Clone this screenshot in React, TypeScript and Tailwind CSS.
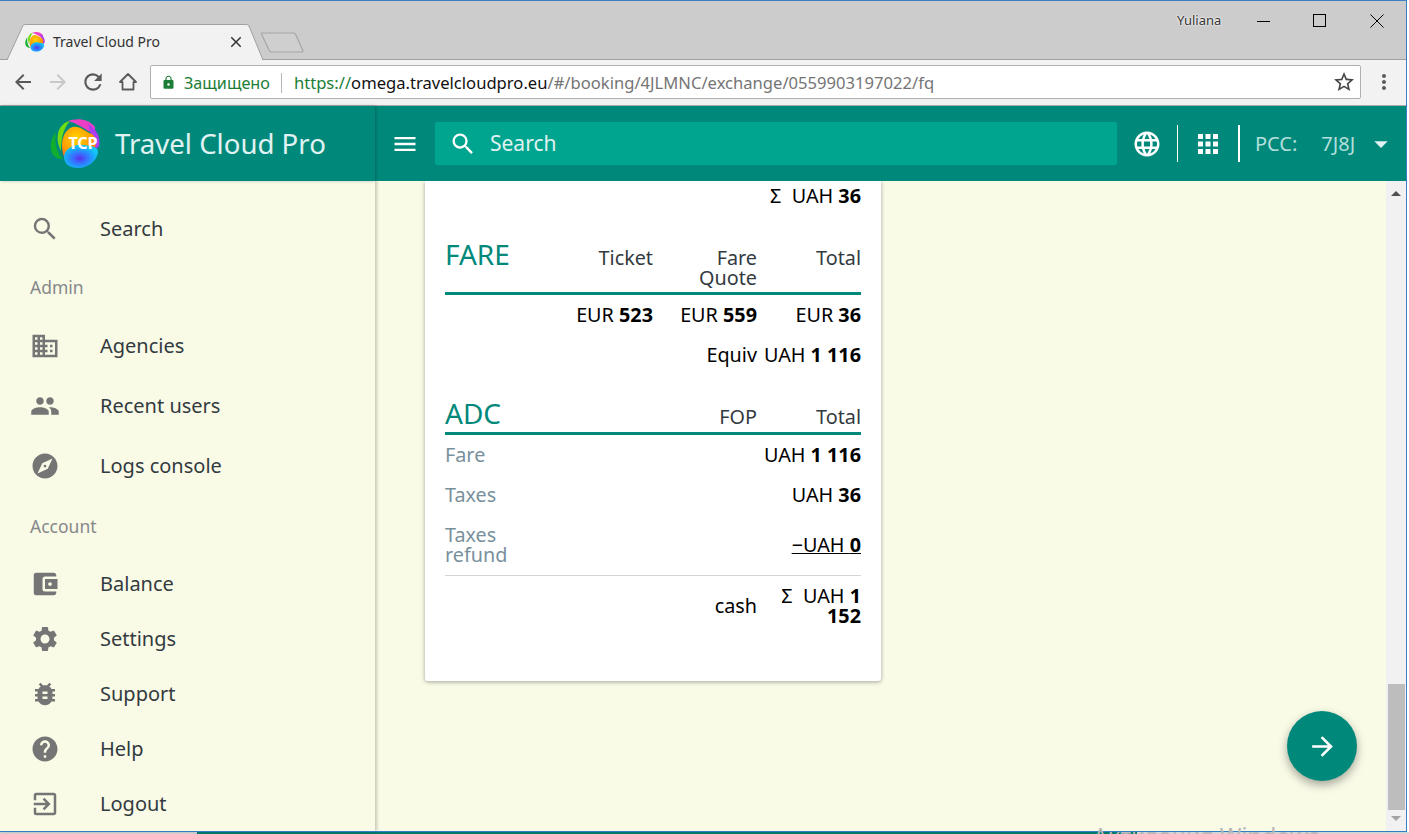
import React from "react";
import { MdSearch, MdBusiness, MdPeople, MdExplore, MdAccountBalanceWallet, MdSettings, MdBugReport, MdHelp, MdExitToApp, MdMenu, MdLanguage, MdApps, MdArrowForward, MdArrowDropDown, MdLock, MdClose, MdArrowBack, MdRefresh, MdStarBorder, MdMoreVert } from "react-icons/md";

function Logo({ size, mark = true }: { size: number; mark?: boolean }) {
  const id = "g" + size;
  return (
    <svg width={size} height={size} viewBox="0 0 50 50">
      <defs>
        <radialGradient id={id + "o"} cx="0.42" cy="0.35" r="0.65">
          <stop offset="0" stopColor="#ffd400" />
          <stop offset="0.7" stopColor="#ff9a00" />
          <stop offset="1" stopColor="#ff6a20" />
        </radialGradient>
        <radialGradient id={id + "b"} cx="0.46" cy="0.58" r="0.55">
          <stop offset="0" stopColor="#5b2fe6" />
          <stop offset="0.35" stopColor="#3a6cff" />
          <stop offset="0.75" stopColor="#1aa8ff" />
          <stop offset="1" stopColor="#12c8f5" />
        </radialGradient>
      </defs>
      <path d="M6 13C1 19-1 27 2 34 4 38 8 40 13 40 7 34 4 24 6 13Z" fill="#0fae2e" />
      <path d="M20 2C11 4 6 12 8 24 9 28 10 30 11 32 11 20 13 10 20 2Z" fill="#6fdd12" />
      <path d="M18 2C26-1 38-1 45 8 46 12 42 14 38 12 32 8 26 4 18 2Z" fill="#ea3fc4" />
      <path d="M38 5C46 9 51 18 49 27 47 31 43 30 42 24 42 18 40 12 38 5Z" fill="#ad3cf2" />
      <path d="M12 26C12 14 20 6 27 8 33 9 36 13 42 15 47 19 47 26 44 30 36 36 24 36 15 40 13 36 12 31 12 26Z" fill={`url(#${id}o)`} />
      <path d="M14 38C14 30 24 25 33 26 41 27 48 27 48 33 47 42 38 49 28 49 20 49 14 45 14 38Z" fill={`url(#${id}b)`} />
      {mark && (
        <text x="33" y="30" textAnchor="middle" fontSize="16" fontWeight="700" fill="#fff" fontFamily="Noto Sans, sans-serif">TCP</text>
      )}
    </svg>
  );
}

function NavItem({ icon, label, h }: { icon: React.ReactNode; label: string; h: string }) {
  return (
    <div className={`flex items-center ${h} pl-[30px]`}>
      <span className="w-[30px] flex justify-center text-[#757575] text-[30px]">{icon}</span>
      <span className="ml-10 text-[20px] text-[#333a40]">{label}</span>
    </div>
  );
}

function Amount({ cur, val }: { cur: string; val: string }) {
  return (
    <span className="whitespace-nowrap">
      {cur} <b className="font-bold">{val}</b>
    </span>
  );
}

function Chrome() {
  return (
    <div className="h-[105px] shrink-0 flex flex-col border-t border-[#3b7fc4] bg-[#cccccc] relative">
      <div className="h-[58px] shrink-0 relative">
        <div className="absolute left-[6px] top-[23px] h-[36px] w-[258px] z-10">
          <svg width="258" height="37" viewBox="0 0 258 37" className="absolute inset-0">
            <path d="M1 36 L17 1.5 Q18 0.5 20 0.5 L240 0.5 Q242 0.5 243 2 L257 36" fill="#f2f2f2" stroke="#a0a0a0" />
          </svg>
          <span className="absolute left-[19px] top-[8px]"><Logo size={20} mark={false} /></span>
          <span className="absolute left-[47px] top-[8px] text-[14px] leading-[20px] text-[#333] font-['Noto_Sans',sans-serif]">Travel Cloud Pro</span>
          <MdClose className="absolute left-[221px] top-[9px] text-[#333]" size={18} />
        </div>
        <svg width="46" height="24" viewBox="0 0 46 24" className="absolute left-[260px] top-[30px]">
          <path d="M2 2 L33 2 Q35 2 36 4 L43 20 Q43 21 41 21 L12 21 Q10 21 9 19 L2 4 Q1 2 2 2Z" fill="#cfcfcf" stroke="#a6a6a6" strokeWidth="1.2" />
        </svg>
        <span className="absolute left-[1177px] top-[11px] text-[13px] leading-[16px] text-[#333] [text-shadow:0_0_2px_#fff,0_0_2px_#fff] font-['Noto_Sans',sans-serif]">Yuliana</span>
        <span className="absolute left-[1257px] top-[20px] w-[13px] h-px bg-black" />
        <span className="absolute left-[1313px] top-[13px] w-[13px] h-[13px] border border-black" />
        <svg width="14" height="14" viewBox="0 0 14 14" className="absolute left-[1370px] top-[13px]">
          <path d="M0.5 0.5 L13.5 13.5 M13.5 0.5 L0.5 13.5" stroke="#000" fill="none" />
        </svg>
      </div>
      <div className="h-[46px] shrink-0 bg-[#f2f2f2] border-t border-[#a0a0a0] relative">
        <MdArrowBack className="absolute left-[11px] top-[10px] text-[#5a5a5a]" size={24} />
        <MdArrowBack className="absolute left-[46px] top-[10px] text-[#c8c8c8] rotate-180" size={24} />
        <MdRefresh className="absolute left-[80px] top-[9px] text-[#5a5a5a]" size={26} />
        <svg width="20" height="20" viewBox="0 0 20 20" className="absolute left-[118px] top-[12px]">
          <path d="M10 2 L18 10 H15.5 V17.5 H4.5 V10 H2 Z" fill="none" stroke="#5a5a5a" strokeWidth="1.8" strokeLinejoin="round" />
        </svg>
        <div className="absolute left-[150px] top-[5px] w-[1211px] h-[34px] pt-[1px] bg-white border border-[#b0b0b0] rounded-[2px] flex items-center text-[16.2px] leading-[20px] whitespace-nowrap font-['Noto_Sans',sans-serif]">
          <MdLock className="ml-[10px] text-[#1b7e36]" size={15} />
          <span className="ml-[8px] text-[#1b7e36]">Защищено</span>
          <span className="ml-[11px] h-[20px] w-px bg-[#b5b5b5]" />
          <span className="ml-[12px] text-[16.6px]"><span className="text-[#1b7e36]">https://</span><span className="text-[#111]">omega.travelcloudpro.eu</span><span className="text-[#757575]">/#/booking/4JLMNC/exchange/0559903197022/fq</span></span>
          <MdStarBorder className="absolute right-[4px] top-[4px] text-[#444]" size={24} />
        </div>
        <MdMoreVert className="absolute left-[1372px] top-[10px] text-[#5a5a5a]" size={24} />
      </div>
    </div>
  );
}

function TopBar() {
  return (
    <div className="h-[76px] shrink-0 bg-[#00897b] flex items-stretch text-white border-t border-[#a8a8a8] relative z-10">
      <div className="w-[375px] shrink-0 flex items-center pl-[50px] shadow-[1px_0_3px_rgba(0,0,0,0.25)]">
        <Logo size={50} />
        <span className="ml-[15px] -mt-[2px] text-[27.6px] leading-[40px] text-[#e0f2f1] font-['Noto_Sans',sans-serif]">Travel Cloud Pro</span>
      </div>
      <div className="flex-1 flex items-center min-w-0 pl-[16px]">
        <MdMenu size={28} className="shrink-0" />
        <div className="ml-[16px] w-[682px] h-[43px] bg-[#00a58f] rounded-[2px] flex items-center pl-[14px]">
          <MdSearch size={28} />
          <span className="ml-[13px] text-[21px] text-[#e0f2f1]">Search</span>
        </div>
        <MdLanguage size={30} className="ml-[15px] shrink-0" />
        <span className="ml-[15px] w-px h-[37px] bg-white" />
        <MdApps size={30} className="ml-[15px] shrink-0" />
        <span className="ml-[15px] w-[2px] h-[37px] bg-white" />
        <span className="ml-[15px] text-[20px] text-[#b2dfdb]">PCC:</span>
        <span className="ml-[24px] text-[20px] text-[#b2dfdb]">7J8J</span>
        <MdArrowDropDown size={32} className="ml-[10px] text-[#e0f2f1] shrink-0" />
      </div>
    </div>
  );
}

function Sidebar() {
  return (
    <div className="w-[375px] shrink-0 bg-[#f9fbe7] shadow-[2px_0_3px_rgba(0,0,0,0.2)] relative z-[1] flex flex-col pt-[18px]">
      <NavItem icon={<MdSearch />} label="Search" h="h-[60px]" />
      <div className="h-[57px] flex items-center pl-[30px] text-[17.5px] text-[#86888a]">Admin</div>
      <NavItem icon={<MdBusiness />} label="Agencies" h="h-[60px]" />
      <NavItem icon={<MdPeople />} label="Recent users" h="h-[60px]" />
      <NavItem icon={<MdExplore />} label="Logs console" h="h-[60px]" />
      <div className="h-[60px] flex items-center pl-[30px] text-[17.5px] text-[#86888a]">Account</div>
      <NavItem icon={<MdAccountBalanceWallet />} label="Balance" h="h-[55px]" />
      <NavItem icon={<MdSettings />} label="Settings" h="h-[55px]" />
      <NavItem icon={<MdBugReport />} label="Support" h="h-[55px]" />
      <NavItem icon={<MdHelp />} label="Help" h="h-[55px]" />
      <NavItem icon={<MdExitToApp />} label="Logout" h="h-[55px]" />
    </div>
  );
}

function Row({ children, className = "" }: { children: React.ReactNode; className?: string }) {
  return <div className={`grid grid-cols-[104px_104px_104px_104px] ${className}`}>{children}</div>;
}

function Card() {
  return (
    <div className="w-[456px] h-[500px] bg-white rounded-b-[3px] shadow-[0_1px_4px_rgba(0,0,0,0.35)] px-[20px] text-[19.8px] leading-[20px] text-black">
      <div className="h-[30px] flex justify-end items-center"><span>Σ&nbsp; UAH <b>36</b></span></div>
      <div className="h-[81px] pt-[37px]">
        <Row className="text-right text-[#333a40] items-start">
          <span className="text-left text-[28px] leading-[28px] text-[#00897b] -mt-[8px]">FARE</span>
          <span>Ticket</span>
          <span className="pl-[30px]">Fare Quote</span>
          <span>Total</span>
        </Row>
      </div>
      <div className="h-[3px] bg-[#00897b]" />
      <Row className="text-right h-[40px] items-center">
        <span />
        <Amount cur="EUR" val="523" />
        <Amount cur="EUR" val="559" />
        <Amount cur="EUR" val="36" />
      </Row>
      <Row className="text-right h-[40px] items-center">
        <span />
        <span />
        <span>Equiv</span>
        <Amount cur="UAH" val="1 116" />
      </Row>
      <Row className="text-right text-[#333a40] h-[57px] items-end">
        <span className="text-left text-[28px] leading-[28px] text-[#00897b] pb-[5px]">ADC</span>
        <span />
        <span className="pb-[5px]">FOP</span>
        <span className="pb-[5px]">Total</span>
      </Row>
      <div className="h-[3px] bg-[#00897b]" />
      <Row className="text-right h-[40px] items-center">
        <span className="text-left text-[#78909c]">Fare</span>
        <span />
        <span />
        <Amount cur="UAH" val="1 116" />
      </Row>
      <Row className="text-right h-[40px] items-center">
        <span className="text-left text-[#78909c]">Taxes</span>
        <span />
        <span />
        <Amount cur="UAH" val="36" />
      </Row>
      <Row className="text-right h-[61px] items-center border-b border-[#d5d5d5]">
        <span className="text-left text-[#78909c]">Taxes refund</span>
        <span />
        <span />
        <span className="underline whitespace-nowrap">−UAH <b>0</b></span>
      </Row>
      <Row className="text-right h-[60px] items-center">
        <span />
        <span />
        <span>cash</span>
        <div>
          <div>Σ&nbsp; UAH <b>1</b></div>
          <div><b>152</b></div>
        </div>
      </Row>
    </div>
  );
}

function Scrollbar() {
  return (
    <div className="w-[20px] shrink-0 bg-[#f1f1f1] flex flex-col items-center relative z-[2]">
      <div className="h-[24px] flex items-center justify-center">
        <span className="w-0 h-0 border-x-[5px] border-x-transparent border-b-[5px] border-b-[#505050]" />
      </div>
      <div className="flex-1" />
      <div className="w-[17px] h-[126px] bg-[#bdbdbd]" />
      <div className="h-[21px] pt-[6px] flex justify-center">
        <span className="w-0 h-0 border-x-[5px] border-x-transparent border-t-[5px] border-t-[#a3a3a3]" />
      </div>
    </div>
  );
}

export default function App() {
  return (
    <div className="w-[1409px] h-[834px] overflow-hidden relative bg-white font-['Noto_Sans','Open_Sans',sans-serif]">
      <div className="flex h-[832px]">
        <div className="w-[1406px] h-[831px] shrink-0 flex flex-col">
          <Chrome />
          <TopBar />
          <div className="flex-1 flex min-h-0 bg-[#f9fbe7]">
            <Sidebar />
            <div className="flex-1 min-w-0 pl-[50px] relative">
              <Card />
              <div className="absolute left-[912px] top-[530px] w-[70px] h-[70px] rounded-full bg-[#00897b] shadow-[0_4px_10px_rgba(0,0,0,0.35)] flex items-center justify-center text-white">
                <MdArrowForward size={31} />
              </div>
            </div>
            <Scrollbar />
          </div>
        </div>
        <div className="w-px shrink-0 bg-[#3b7fc4]" />
      </div>
      <div className="absolute left-0 w-[1407px] top-[831px] h-px bg-[#2f7fc1] z-20" />
      <div className="h-[2px] flex">
        <div className="w-[197px] bg-[#cfcfcf]" />
        <div className="w-[940px] bg-[#00796b]" />
        <div className="flex-1 bg-[#d4d4d4]" />
      </div>
      <span className="absolute left-[1093px] top-[820px] z-30 text-[23.3px] leading-[32px] whitespace-nowrap text-[#b8b8b8]">Активация Windows</span>
    </div>
  );
}
